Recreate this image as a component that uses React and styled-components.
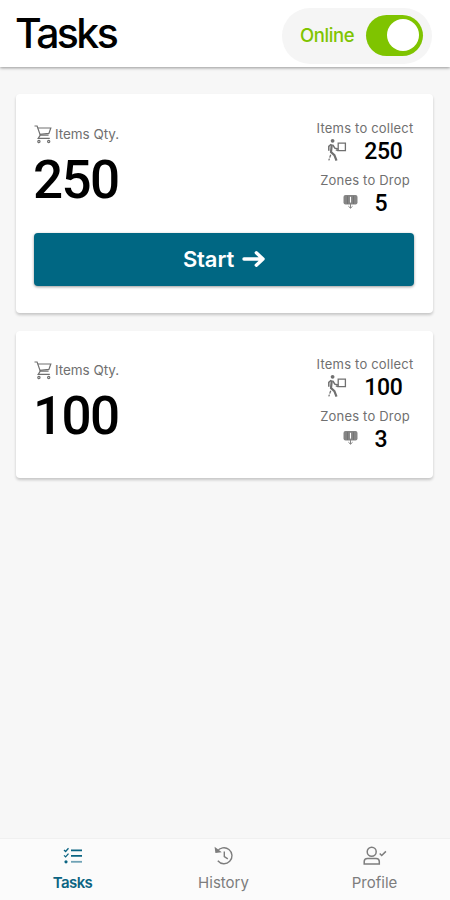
import React from 'react';
import styled, { createGlobalStyle } from 'styled-components';

const GlobalStyle = createGlobalStyle`
    * {
        box-sizing: border-box;
    }

    body {
        margin: 0;
        background-color: #f7f7f7;
        font-family: Inter, "Liberation Sans", sans-serif;
    }
`

const AppBox = styled.div`
    height: 100vh;
    display: flex;
    flex-direction: column;
    overflow: hidden;
`

const Header = styled.header`
    height: 67px;
    padding: 0 18px 0 15px;
    display: flex;
    justify-content: space-between;
    align-items: flex-start;
    background-color: white;
    box-shadow: 0 1px 3px rgba(0, 0, 0, 0.4);
`

const Title = styled.h1`
    margin: 8px 0 0;
    font-size: 41px;
    line-height: 50px;
    font-weight: 500;
    letter-spacing: -2.6px;
    color: black;
`

const StatusPill = styled.div`
    width: 150px;
    height: 56px;
    margin-top: 8px;
    padding: 0 9px 2px 18px;
    display: flex;
    justify-content: space-between;
    align-items: center;
    border-radius: 28px;
    background-color: #f5f5f5;
`

const StatusText = styled.span`
    font-size: 18.5px;
    font-weight: 500;
    letter-spacing: -0.4px;
    color: #7fc400;
`

const Toggle = styled.button`
    width: 57px;
    height: 41px;
    padding: 0 4px;
    display: flex;
    align-items: center;
    justify-content: ${(props) => (props.$on ? 'flex-end' : 'flex-start')};
    border: none;
    border-radius: 21px;
    background-color: ${(props) => (props.$on ? '#7fc400' : '#bbbbbb')};
`

const Knob = styled.span`
    width: 32px;
    height: 32px;
    border-radius: 50%;
    background-color: white;
`

const TaskList = styled.main`
    flex-grow: 1;
    padding: 27px 17px 0 16px;
    display: flex;
    flex-direction: column;
    gap: 18px;
`

const Card = styled.section`
    padding: ${(props) => (props.$compact ? '24px 19px 28px 18px' : '25px 19px 27px 18px')};
    border-radius: 4px;
    background-color: white;
    box-shadow: 0 2px 3px rgba(0, 0, 0, 0.2);
`

const CardTop = styled.div`
    height: 95px;
    display: flex;
    justify-content: space-between;
`

const Quantity = styled.div`
    padding-top: 5px;
`

const QuantityLabel = styled.div`
    height: 20px;
    display: flex;
    align-items: center;
    gap: 2px;
    font-size: 13.5px;
    letter-spacing: -0.05px;
    color: #707070;
`

const QuantityValue = styled.div`
    margin-top: 7px;
    margin-left: -1px;
    font-family: Roboto, sans-serif;
    font-size: 53px;
    line-height: 58px;
    font-weight: 500;
    letter-spacing: -1.6px;
    color: black;
`

const Details = styled.div`
    width: 98px;
    display: flex;
    flex-direction: column;
    align-items: center;
`

const DetailLabel = styled.div`
    height: 18px;
    line-height: 18px;
    font-size: 13px;
    letter-spacing: 0.2px;
    white-space: nowrap;
    color: #707070;
`

const DetailRow = styled.div`
    height: 26px;
    margin-bottom: 8px;
    display: flex;
    align-items: center;
    gap: 17px;
`

const DetailValue = styled.span`
    padding-top: 2px;
    font-family: Roboto, sans-serif;
    font-size: 23px;
    font-weight: 500;
    letter-spacing: -0.3px;
    color: black;
`

const StartButton = styled.button`
    width: 100%;
    height: 53px;
    margin-top: 19px;
    padding: 0 0 1px;
    display: flex;
    justify-content: center;
    align-items: center;
    gap: 8px;
    border: none;
    border-radius: 4px;
    background-color: #006783;
    box-shadow: 0 1px 3px rgba(0, 0, 0, 0.4);
    font-family: inherit;
    font-size: 22px;
    font-weight: 600;
    letter-spacing: -0.1px;
    color: white;
`

const Nav = styled.nav`
    height: 62px;
    display: grid;
    grid-template-columns: 145px 157px 145px;
    border-top: 1px solid #f0f0f0;
    background-color: #fbfbfb;
`

const NavItem = styled.a`
    padding-top: 6px;
    display: flex;
    flex-direction: column;
    align-items: center;
    gap: 5px;
    font-size: 15px;
    line-height: 22px;
    font-weight: ${(props) => (props.$active ? 600 : 400)};
    letter-spacing: ${(props) => (props.$active ? '-0.6px' : '0')};
    color: ${(props) => (props.$active ? '#0b6482' : '#7d7d7d')};
`

const CartIcon = () => (
    <svg width="19" height="19" viewBox="0.5 0.5 19 19" fill="none" stroke="#707070" strokeWidth="1.2">
        <path d="M1 1.5h2.6l3.2 9.2h8.3" />
        <path d="M4.3 3.5h13l-1.9 5.4-9.1 1" />
        <path d="M6.8 10.7l-2.1 3.2h11.6" />
        <circle cx="5.4" cy="17" r="1.1" />
        <circle cx="15.2" cy="17" r="1.1" />
    </svg>
)

const CollectIcon = () => (
    <svg width="20" height="24" viewBox="0 0 20 24" fill="none" stroke="#707070" strokeWidth="1.3">
        <circle cx="5.6" cy="2.8" r="1.9" fill="#707070" stroke="none" />
        <path d="M4.8 6.3L4 14l3.4 3.2 2.1 5.5" strokeWidth="2.2" />
        <path d="M4.2 6.2L1.8 8.4v4.4M5.8 6.8l2 3.4 3.4.7" strokeWidth="1.5" />
        <path d="M3.7 16.8l-1.9 5.6" strokeDasharray="3 1" />
        <path d="M11.2 5.2h7.2v7.4h-7.2z" />
        <path d="M8.8 11.8l2.4.8" />
    </svg>
)

const DropIcon = () => (
    <svg width="15" height="14" viewBox="0 0 15 14">
        <rect x="0.5" y="0" width="14" height="9.5" rx="2" fill="#858585" />
        <path d="M4.5 1v8M10.5 1v8" stroke="#707070" strokeWidth="0.8" />
        <path d="M7.5 1.8v5.8" stroke="white" strokeWidth="1.1" />
        <path d="M7.5 9v4M5.4 11.2l2.1 2 2.1-2" stroke="#858585" strokeWidth="1" fill="none" />
    </svg>
)

const ArrowIcon = () => (
    <svg width="23" height="18" viewBox="0 0 23 18" fill="none" stroke="white" strokeWidth="3.4" strokeLinecap="round" strokeLinejoin="round">
        <path d="M2 9h19M14.3 2.8L21 9l-6.7 6.2" />
    </svg>
)

const TasksIcon = () => (
    <svg width="20" height="22" viewBox="0 0 20 22" fill="none" stroke="#0b6482">
        <path d="M1 5l1.6 1.5L5.5 3.2M1 10.4l1.6 1.5 2.9-3.3" strokeWidth="1.3" />
        <path d="M8 5.3h11M8 10.8h11" strokeWidth="1.8" />
        <path d="M8 16.8h11" stroke="#6fa2b5" strokeWidth="1.8" />
        <circle cx="3" cy="16.8" r="1.6" fill="#0b6482" stroke="none" />
    </svg>
)

const HistoryIcon = () => (
    <svg width="20" height="22" viewBox="0 0 20 22" fill="none" stroke="#7d7d7d" strokeWidth="1.4">
        <path d="M3.2 6.5a8 8 0 1 1 .6 9.3" />
        <path d="M1.5 3.3l.5 4 4-.5z" fill="#7d7d7d" />
        <path d="M10.3 6.4v5.2l3.5 2.2" />
    </svg>
)

const ProfileIcon = () => (
    <svg width="24" height="22" viewBox="0 0 24 22" fill="none" stroke="#7d7d7d" strokeWidth="1.5">
        <circle cx="8.7" cy="6.7" r="4.5" />
        <path d="M1.2 19v-2.4c0-2 1.2-3.2 3.2-3.2h8.7c2 0 3.2 1.2 3.2 3.2V19z" />
        <path d="M16.7 8.5l2 2 4.2-4.1" />
    </svg>
)

const tasks = [
    { id: 1, quantity: 250, collect: 250, zones: 5, canStart: true },
    { id: 2, quantity: 100, collect: 100, zones: 3, canStart: false },
];

class App extends React.Component {
    state = {
        online: true,
    };

    toggleOnline = () => {
        this.setState({ online: !this.state.online });
    };

    render() {
        return (
        <AppBox>
            <GlobalStyle />
            <Header>
                <Title>Tasks</Title>
                <StatusPill>
                    <StatusText>{this.state.online ? 'Online' : 'Offline'}</StatusText>
                    <Toggle $on={this.state.online} onClick={this.toggleOnline}>
                        <Knob />
                    </Toggle>
                </StatusPill>
            </Header>
            <TaskList>
                {tasks.map((task) => {
                return <Card key={task.id} $compact={!task.canStart}>
                    <CardTop>
                        <Quantity>
                            <QuantityLabel><CartIcon />Items Qty.</QuantityLabel>
                            <QuantityValue>{task.quantity}</QuantityValue>
                        </Quantity>
                        <Details>
                            <DetailLabel>Items to collect</DetailLabel>
                            <DetailRow>
                                <CollectIcon />
                                <DetailValue>{task.collect}</DetailValue>
                            </DetailRow>
                            <DetailLabel>Zones to Drop</DetailLabel>
                            <DetailRow>
                                <DropIcon />
                                <DetailValue>{task.zones}</DetailValue>
                            </DetailRow>
                        </Details>
                    </CardTop>
                    {task.canStart && <StartButton>Start <ArrowIcon /></StartButton>}
                </Card>
                })}
            </TaskList>
            <Nav>
                <NavItem $active><TasksIcon />Tasks</NavItem>
                <NavItem><HistoryIcon />History</NavItem>
                <NavItem><ProfileIcon />Profile</NavItem>
            </Nav>
        </AppBox>
        );
    }
}


export default App;
